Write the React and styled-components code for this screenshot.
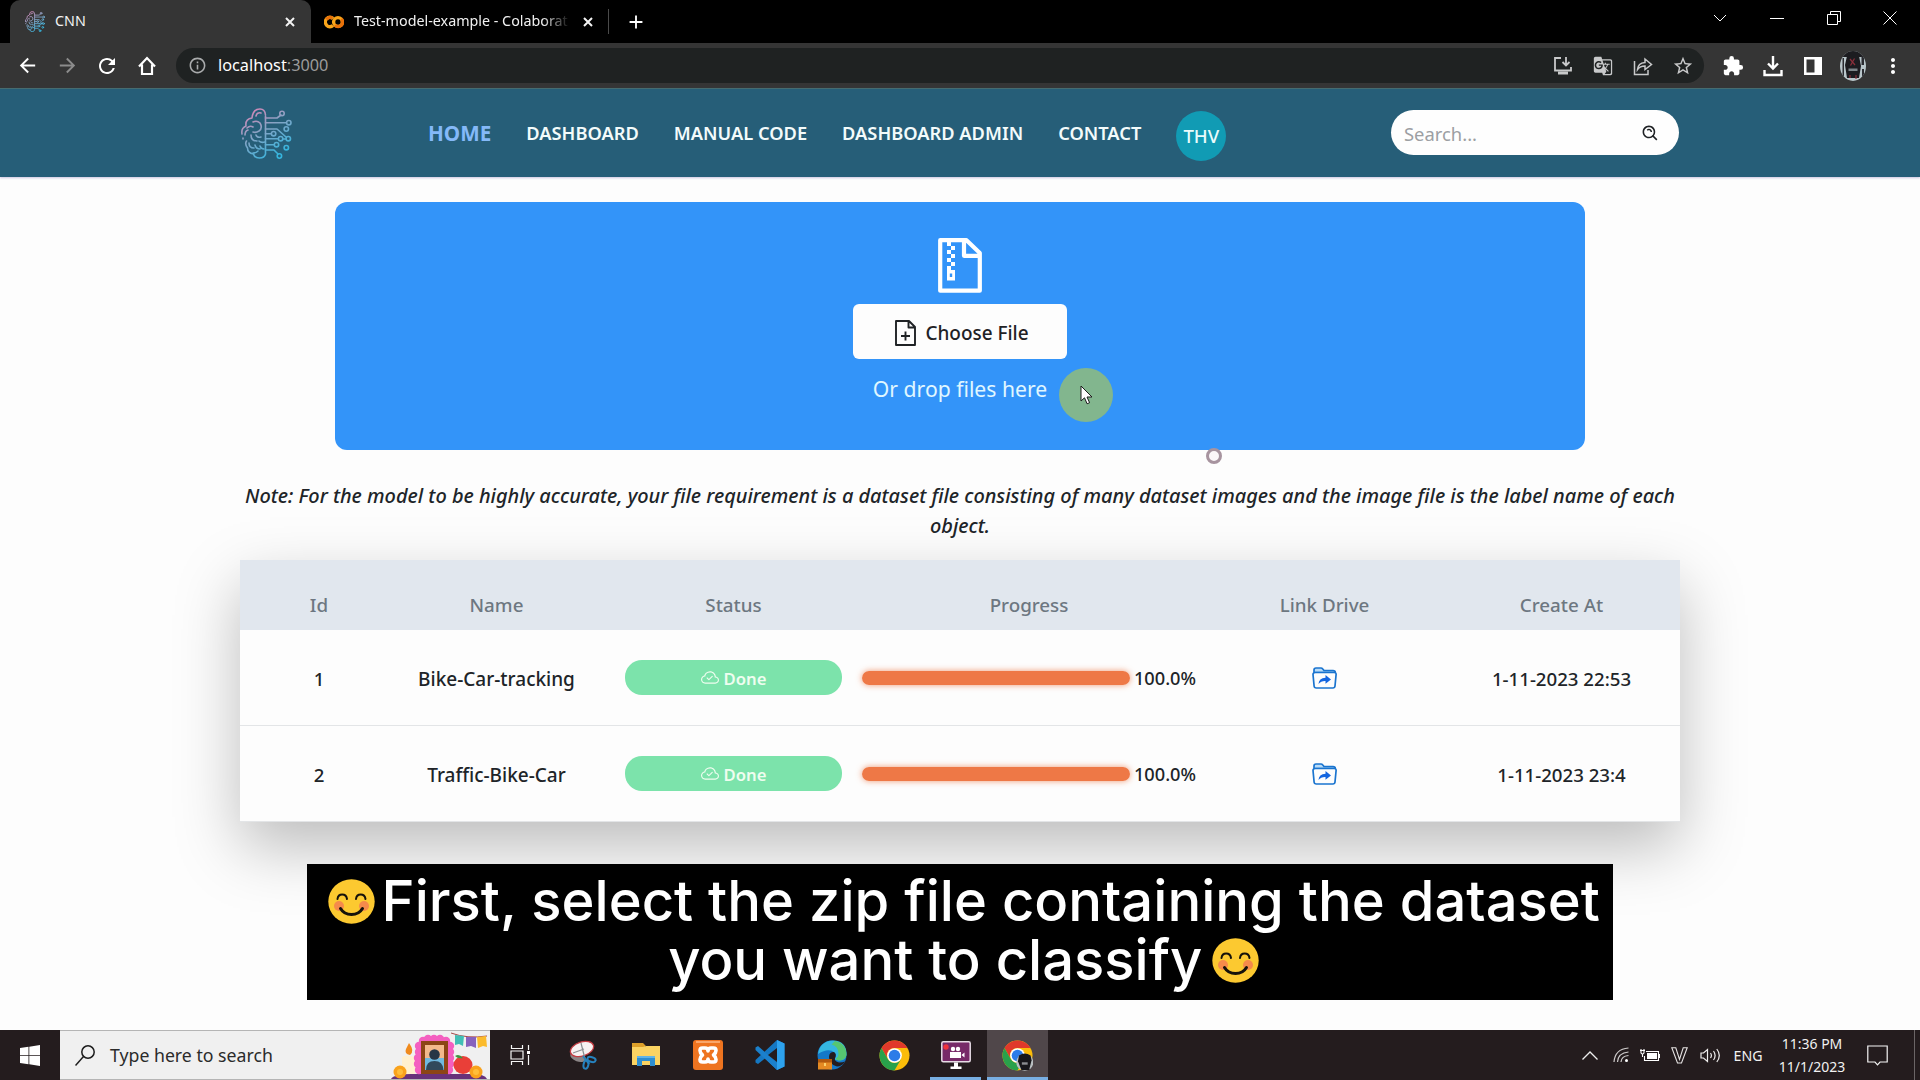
import React from 'react';
import styled, { createGlobalStyle } from 'styled-components';
import {
  MdArrowBack, MdArrowForward, MdRefresh, MdOutlineInfo, MdStarBorder,
  MdExtension, MdMoreVert, MdClose, MdAdd, MdGTranslate,
} from 'react-icons/md';
import { BiSearchAlt } from 'react-icons/bi';
import { BsCloudCheck } from 'react-icons/bs';

const Global = createGlobalStyle`
  *, *::before, *::after { box-sizing: border-box; }
  body { margin: 0; background: #fdfdfd; font-family: "Noto Sans", "Open Sans", sans-serif; overflow: hidden; }
  svg { display: block; flex: none; }
`;

/* ---------- shell ---------- */
const Screen = styled.div`
  position: relative;
  width: 1920px;
  height: 1080px;
  display: flex;
  flex-direction: column;
  overflow: hidden;
`;
const Slot = styled.span`
  width: ${p => p.$w || 40}px;
  height: 100%;
  flex: none;
  display: flex;
  align-items: center;
  justify-content: center;
  color: ${p => p.$c || '#fff'};
`;
const Grow = styled.span`flex: 1;`;

/* ---------- browser chrome ---------- */
const TabStrip = styled.header`
  height: 43px;
  flex: none;
  display: flex;
  align-items: stretch;
  background: #000;
  padding: 0 2px 0 10px;
`;
const Tab = styled.div`
  width: ${p => p.$w}px;
  display: flex;
  align-items: center;
  padding-left: ${p => p.$pl}px;
  border-radius: 10px 10px 0 0;
  background: ${p => (p.$active ? '#353535' : 'transparent')};
  color: #f1f1f1;
  font-size: 14.3px;
`;
const TabTitle = styled.span`
  width: ${p => p.$w}px;
  margin-left: 10px;
  white-space: nowrap;
  overflow: hidden;
  line-height: 20px;
  padding-bottom: 1px;
  ${p => p.$fade && 'mask-image: linear-gradient(90deg, #000 88%, transparent 101%);'}
`;
const TabDivider = styled.span`
  width: 1px;
  height: 25px;
  align-self: center;
  background: #4a4a4a;
`;
const WindowButtons = styled.div`
  display: flex;
  height: 36px;
  margin-left: auto;
`;
const Toolbar = styled.div`
  height: 45px;
  flex: none;
  display: flex;
  align-items: center;
  background: #353535;
  padding: 0 7px 0 7px;
`;
const AddressBar = styled.div`
  width: 1528px;
  height: 35px;
  margin: 0 9px 0 9px;
  padding: 0 1px 0 1px;
  border-radius: 18px;
  background: #1f2222;
  display: flex;
  align-items: center;
  color: #fff;
  font-size: 16.3px;
`;
const Url = styled.span`
  padding: 0 0 1px 1px;
`;
const Port = styled.span`color: #9b9b9b;`;
const Avatar = styled.span`
  width: 26px;
  height: 30px;
  border-radius: 50%;
  overflow: hidden;
`;

/* ---------- site header ---------- */
const Navbar = styled.nav`
  height: 89px;
  flex: none;
  display: flex;
  align-items: center;
  padding: 0 241px 0 241px;
  background: #265e78;
  border-top: 1px solid #466c70;
  box-shadow: 0 1px 2px rgba(110, 90, 170, 0.35);
`;
const NavList = styled.div`
  display: flex;
  align-items: center;
  gap: 35px;
  margin-left: 136px;
`;
const NavLink = styled.a`
  font-size: ${p => (p.$active ? 20.7 : 18.25)}px;
  font-weight: ${p => (p.$active ? 700 : 600)};
  color: ${p => (p.$active ? '#84b9f8' : '#f3fbfb')};
  white-space: nowrap;
  line-height: 30px;
`;
const UserBadge = styled.span`
  width: 50px;
  height: 50px;
  margin-top: 5px;
  border-radius: 50%;
  background: #119bb4;
  color: #e9fbfb;
  font-size: 18.6px;
  font-weight: 500;
  display: flex;
  align-items: center;
  justify-content: center;
`;
const SearchField = styled.div`
  width: 288px;
  height: 45px;
  margin: 0 0 1px auto;
  border-radius: 23px;
  background: #fefefe;
  display: flex;
  align-items: center;
  justify-content: space-between;
  padding: 1px 19px 0 13px;
  color: #9c9fa3;
  font-size: 18.4px;
`;

/* ---------- page content ---------- */
const Main = styled.main`
  flex: 1;
  width: 1440px;
  margin: 0 auto;
  padding-top: 25px;
  display: flex;
  flex-direction: column;
  align-items: center;
`;
const DropZone = styled.section`
  width: 1250px;
  height: 248px;
  flex: none;
  border-radius: 12px;
  background: #3394f9;
  display: flex;
  flex-direction: column;
  align-items: center;
  padding-top: 36px;
`;
const ChooseButton = styled.button`
  width: 214px;
  height: 55px;
  margin: 11px 0 15px;
  border: 0;
  border-radius: 6px;
  background: #fdfdfd;
  color: #1f2225;
  font: 500 18.95px/30px "Noto Sans", sans-serif;
  display: flex;
  align-items: center;
  justify-content: center;
  gap: 9px;
  padding: 2px 0 0 4px;
`;
const DropHint = styled.span`
  font-size: 21.15px;
  line-height: 30px;
  color: #e0f7ff;
`;
const Note = styled.p`
  width: 1440px;
  margin: 30.5px 0 19.5px;
  font-size: 19.9px;
  line-height: 30px;
  font-style: italic;
  font-weight: 500;
  text-align: center;
  color: #202428;
`;
const Table = styled.div`
  width: 1440px;
  background: #fdfdfd;
  box-shadow: 0 25px 60px rgba(0, 0, 0, 0.26);
  font-weight: 500;
`;
const GridRow = styled.div`
  display: grid;
  grid-template-columns: 158px 217px 237px 354px 237px 237px;
  align-items: center;
`;
const HeadRow = styled(GridRow)`
  height: 70px;
  padding-top: 20px;
  background: #e1e7ee;
  color: #6d7781;
  font-size: 18.8px;
`;
const BodyRow = styled(GridRow)`
  height: 96px;
  border-bottom: 1px solid #e3e5e7;
  color: #202428;
  font-size: 19px;
`;
const Cell = styled.div`
  display: flex;
  align-items: center;
  justify-content: center;
  padding: ${p => (p.$name ? '0 20px 0 0' : '0 10px')};
  gap: 4px;
  white-space: nowrap;
`;
const Num = styled.span`
  font-size: ${p => p.$s || 18.65}px;
  padding-top: ${p => p.$t || 1}px;
`;
const StatusPill = styled.span`
  width: 217px;
  height: 35px;
  border-radius: 17px;
  background: #7ce3ab;
  color: #effdf0;
  font-size: 16.7px;
  font-weight: 600;
  display: flex;
  align-items: center;
  justify-content: center;
  gap: 5px;
  padding-top: 1px;
`;
const Track = styled.span`
  flex: 1;
  height: 14px;
  margin-top: 1px;
  border-radius: 7px;
  box-shadow: 0 0 6px rgba(238, 120, 70, 0.75);
`;
const Fill = styled.span`
  display: block;
  height: 100%;
  border-radius: inherit;
  background: #ee7846;
`;

/* ---------- recording overlays ---------- */
const Caption = styled.div`
  position: absolute;
  left: 307px;
  top: 864px;
  width: 1305.500px;
  height: 136px;
  padding: 8px 0 0 8px;
  background: #000;
  color: #fff;
  font: 500 56.150px/59px Inter, sans-serif;
  display: flex;
  flex-direction: column;
  align-items: center;
`;
const CaptionLine = styled.div`
  display: flex;
  align-items: center;
  height: 59px;
  white-space: nowrap;
  gap: ${p => p.$gap || 7}px;
`;
const Pointer = styled.div`
  position: absolute;
  left: 1059px;
  top: 368px;
  width: 54px;
  height: 54px;
  border-radius: 50%;
  background: #82b68e;
  padding: 17px 0 0 21px;
`;
const ClickRing = styled.div`
  position: absolute;
  left: 1206px;
  top: 448px;
  width: 16px;
  height: 16px;
  border-radius: 50%;
  border: 3px solid #a7949f;
  background: #fbf7f9;
`;

/* ---------- taskbar ---------- */
const Taskbar = styled.footer`
  height: 50px;
  flex: none;
  position: relative;
  display: flex;
  align-items: stretch;
  background: #241c1e;
  color: #f1f1f1;
`;
const TaskSearch = styled.div`
  width: 430px;
  display: flex;
  align-items: center;
  background: #f0f0f0;
  border: 1px solid #b5b5b5;
  border-left: 0;
  border-right: 0;
  padding: 0 2px 0 15px;
  color: #2b2b2b;
  font-size: 17.7px;
`;
const SearchLabel = styled.span`
  margin-left: 15px;
`;
const AppButton = styled.span`
  width: ${p => p.$w || 62}px;
  display: flex;
  align-items: center;
  justify-content: center;
  background: ${p => (p.$active ? '#50474a' : 'transparent')};
  border-bottom: ${p => (p.$open || p.$active ? '3px solid #78aee2' : '0')};
  padding-top: ${p => (p.$open || p.$active ? 3 : 0)}px;
  margin: ${p => (p.$open ? '0 6px 0 5px' : '0')};
`;
const Tray = styled.div`
  margin-left: auto;
  display: flex;
  align-items: center;
`;
const Lang = styled.span`
  width: 36px;
  text-align: center;
  font-size: 14.2px;
`;
const Clock = styled.span`
  width: 80px;
  margin: 0 0 1px 6px;
  text-align: center;
  font-size: 14px;
  line-height: 23px;
  display: flex;
  flex-direction: column;
`;
const ShowDesktop = styled.span`
  width: 6px;
  height: 50px;
  margin-left: 11px;
  border-left: 1px solid #6b6566;
`;

/* ---------- drawings ---------- */
const Brain = ({ w, h, id, sw = 1.6 }) => (
  <svg width={w} height={h} viewBox="0 0 51 51" fill="none" stroke={`url(#${id})`} strokeWidth={sw} strokeLinecap="round" strokeLinejoin="round" preserveAspectRatio="none">
    <defs>
      <linearGradient id={id} gradientUnits="userSpaceOnUse" x1="8" y1="2" x2="36" y2="48">
        <stop offset="0" stopColor="#d986b6" />
        <stop offset="0.45" stopColor="#86a3c4" />
        <stop offset="1" stopColor="#35b5de" />
      </linearGradient>
    </defs>
    <path d="M24.5 8V46q-1 4-6 4q-5 0-6-4q-6-1-6-6q-3-4-1-7M1 26q-1-6 4-8q-1-7 6-8q1-9 8-9q5 0 5.500 6" />
    <path d="M15 8q1-4 5-3M12 14q4-2 7 1q3 5-1 8q-3 2-6 1M6 20q3-3 6-1M4 27q0-4 3-5M2 30v1M10 27q0 6 6 6M15 27q1 3 5 2M18 33q2 2 6 1M8 35q0 5 5 5M14 37q1 4 5 4M19 38q1 3 4 3M12 45q3 0 5-2" />
    <path d="M24.500 10H36l4-3M24.500 14.700H45M24.500 21H36L45 29M24.500 25.700H30M24.500 30.700H37M24.500 36.700H33M24.500 42H33l4 4M42 31h3" />
    {[[41, 5.5], [47.8, 14.7], [45.3, 21], [32.6, 25.7], [47.3, 30.7], [39.6, 30.7], [35.5, 36.7], [45.3, 39.7], [38.4, 48]].map(([x, y]) => <circle key={x + '-' + y} cx={x} cy={y} r="2.2" />)}
  </svg>
);
const CloseIcon = () => (
  <svg width="10" height="10" viewBox="0 0 10 10" stroke="#f4f4f4" strokeWidth="2"><path d="M1 1l8 8M9 1L1 9" /></svg>
);
const HomeIcon = () => (
  <svg width="18" height="20" viewBox="0 0 18 20" fill="none" stroke="#fff" strokeWidth="2.2"><path d="M1 10.500L9 2l8 8.500M4 8.500V18h10V8.500" /></svg>
);
const InstallIcon = () => (
  <svg width="20" height="20" viewBox="0 0 20 20" fill="none" stroke="#c8c9ca" strokeWidth="1.8"><path d="M8 2H2v12.500h16V11M13 1v8M9.500 6l3.500 3.500L16.500 6" /><path d="M5 17h10" strokeWidth="3" /></svg>
);
const ShareIcon = () => (
  <svg width="20" height="20" viewBox="0 0 20 20" fill="none" stroke="#c8c9ca" strokeWidth="1.5"><path d="M1.500 5V18.500H15V14M4.500 13.500q.5-6.500 7.500-7V3l6.500 5.500L12 13.500V10q-5 0-7.500 3.500z" /></svg>
);
const DownloadIcon = () => (
  <svg width="20" height="22" viewBox="0 0 20 22" fill="none" stroke="#fff" strokeWidth="2.4"><path d="M10 1v12M5 8.500l5 5 5-5M1.500 15v5h17v-5" /></svg>
);
const PanelIcon = () => (
  <svg width="18" height="18" viewBox="0 0 18 18"><path fill="#fff" d="M0 0h18v18H0zM2.500 2.500v13h8v-13z" fillRule="evenodd" /></svg>
);
const AvatarArt = () => (
  <svg width="26" height="30" viewBox="0 0 26 30">
    <path fill="#b9c6ca" d="M0 0h26v30H0z" /><path fill="#1c1c20" d="M2 0h22v6H2zM7 5l6-3 6 3 2 10-2 12H7L5 14z" />
    <path fill="#2a2b30" d="M2.500 7h1.500v18H2.500zM21.500 5h2.500v9h-2.500zM22 18h2v8h-2z" /><path stroke="#8c2f3a" strokeWidth="1.200" d="M10 8l5 6M14.500 7.500l-4 7M10 27v-3M16 28v-4" /><path fill="#7d8589" d="M8.500 17.500h9v2.500h-9z" />
  </svg>
);
const WinIcon = ({ d, w = 14 }) => (
  <svg width={w} height="14" viewBox="0 0 14 14" fill="none" stroke="#fff" strokeWidth="1"><path d={d} /></svg>
);
const ZipIcon = () => (
  <svg width="44" height="55" viewBox="0 0 44 55" fill="none" stroke="#fff" strokeWidth="4.200">
    <path strokeLinejoin="round" d="M2.200 2.200H28.500L41.800 15V52.700H2.200zM26 2.200V17.800H41.800" />
    <path fill="#fff" stroke="none" d="M9 4h4v4H9zM13 8h4v4h-4zM9 12h4v4H9zM13 16h4v4h-4zM9 20h4v4H9zM13 24h4v4h-4zM9 28h4v4H9z" />
    <path fill="#fff" stroke="none" fillRule="evenodd" d="M9 32h8v10.500H9zM11.800 35.500v3.500h2.400v-3.500z" />
  </svg>
);
const FilePlus = () => (
  <svg width="21" height="26" viewBox="0 0 21 26" fill="none" stroke="#1f2225" strokeWidth="1.900" strokeLinejoin="round"><path d="M1 1H14L20 7V25H1zM13.500 1V7.500H20M10.500 11.500v9M6 16h9" /></svg>
);
const FolderShare = () => (
  <svg width="25" height="22" viewBox="0 0 25 22" fill="none" stroke="#1a74cf" strokeWidth="1.700" strokeLinejoin="round">
    <path fill="#b9dcf8" d="M2 5.500V3Q2 1 4 1H9q1 0 1.600.8L12 3.500H21q2.300 0 2.300 2z" /><path fill="#fdfdfd" d="M3.500 5.500H22q2.200 0 2.100 2L23 19q-.2 2-2.200 2H4.300q-2 0-2.200-2L1 7.500q0-2 2.500-2z" />
    <path fill="#1566e0" stroke="none" d="M6.500 17q.3-6 7-6.300V8l5.500 4.400-5.500 4.300V14q-4.500-.2-7 3z" />
  </svg>
);
const Smile = () => (
  <svg width="47" height="45" viewBox="0 0 47 45" role="img">
    <ellipse cx="23.500" cy="22.500" rx="23.200" ry="22.200" fill="#fcc930" />
    <circle cx="11" cy="27" r="5" fill="#f58a4b" /><circle cx="36" cy="27" r="5" fill="#f58a4b" />
    <g fill="none" stroke="#15120b" strokeLinecap="round"><path strokeWidth="2" d="M9.500 20q.5-4.500 4.700-4.500T19 20M28 20q.5-4.500 4.700-4.500T37.500 20" /><path strokeWidth="3" d="M12.500 29.500q3.500 6 11 6t11-6" /></g>
  </svg>
);
const Colab = () => (
  <svg width="20" height="14" viewBox="0 0 20 14" fill="none" strokeWidth="3.400"><path stroke="#f9a51a" d="M9 3.500a4.500 4.800 0 1 0 0 7" /><circle cx="14" cy="7" r="4.400" stroke="#f9a51a" /><path stroke="#e8710a" d="M11 10.300a4.400 4.400 0 0 0 6.300-6.300M2.500 4.500a4.500 4.500 0 0 1 6-1.500" /></svg>
);
const Chrome = ({ s = 31, badge }) => (
  <svg width={s} height={s} viewBox="0 0 32 32">
    <circle cx="16" cy="16" r="15.500" fill="#fbbc09" />
    <path fill="#e0392b" d="M2.600 8.200A15.500 15.500 0 0 1 29.400 8.200H16A7.800 7.800 0 0 0 9.200 19.900z" />
    <path fill="#29a14b" d="M2.600 8.200A15.500 15.500 0 0 0 15.900 31.500L22.700 19.900A7.800 7.800 0 0 1 9.200 19.900z" />
    <circle cx="16" cy="16" r="7.600" fill="#fff" /><circle cx="16" cy="16" r="6" fill="#2d7ce8" />
    {badge && <g><circle cx="23.500" cy="23" r="8.800" fill="#b9bfc1" /><path fill="#17171a" d="M17.500 16q6-4 12 0l1 5-2.500 10h-8L16.500 22z" /><path fill="#8a8d90" d="M20.500 23h6v2.500h-6z" /></g>}
  </svg>
);
const DeadAltar = () => (
  <svg width="97" height="48" viewBox="0 0 97 48">
    <path fill="#68327a" d="M0 48q3-5 20-5h60q14 0 16 5z" /><path fill="#fff0cf" d="M11 26q6-3 13 0v17H11z" /><path fill="#f08a1d" d="M18 12q6 8 1 12-6-1-4-6z" />
    {[[32, 10], [37, 8], [43, 8], [49, 8], [55, 10], [59, 15], [59, 21], [59, 27], [59, 33], [58, 39], [28, 15], [28, 21], [27, 27], [27, 33], [28, 39]].map(([x, y]) => <circle key={x + '-' + y} cx={x} cy={y} r="4.200" fill="#f45fc0" />)}
    <path fill="#8c4515" d="M30 10h27v33H30z" /><path fill="#f3b98c" d="M34 14h19v14H34z" /><path fill="#70b9df" d="M34 27h19v12H34z" /><circle cx="43.500" cy="23.500" r="5.300" fill="#273645" /><path fill="#31495b" d="M35 39q0-9 8.500-9t9 9z" />
    <ellipse cx="72" cy="34" rx="9.500" ry="9" fill="#e93f38" /><path fill="#3d9440" d="M64 25q4-3 8 2-5 1-8-2z" />
    <path stroke="#a64a4a" strokeWidth="1" fill="none" d="M60 2q16 6 36 3" /><path fill="#41bfb5" d="M64 4l9 1-1 10-4-2-4 1z" /><path fill="#8762bd" d="M75 6h10v11l-5-2-5 1z" /><path fill="#fbbb2c" d="M86 6l9-1 1 11-4-1-5 2z" />
    <circle cx="9" cy="41" r="6.500" fill="#f9a21c" /><circle cx="9" cy="41" r="3" fill="#ffbd3a" /><circle cx="85" cy="41" r="6.500" fill="#f9a21c" /><circle cx="85" cy="41" r="3" fill="#ffbd3a" />
  </svg>
);
const TaskView = () => (
  <svg width="21" height="20" viewBox="0 0 21 20" fill="none" stroke="#f5f5f5" strokeWidth="1.200"><path d="M1.500 0v3.500h11V0M1 6h12v8H1zM1.500 20v-3.500h11V20M18.500 0v5M18.500 10v10" /><path fill="#fff" stroke="none" d="M17 6h3v3h-3z" /></svg>
);
const Snip = () => (
  <svg width="28" height="30" viewBox="0 0 28 30"><ellipse cx="9" cy="17" rx="8" ry="4.500" fill="#8b8586" transform="rotate(20 9 17)" /><ellipse cx="13" cy="9" rx="12" ry="7" fill="#f7f2f2" stroke="#c23b42" strokeWidth="1.300" transform="rotate(-18 13 9)" /><path d="M12 3l4 16M4 13l11-4" stroke="#8b8f92" strokeWidth="1.200" /><g fill="none" stroke="#2682bf" strokeWidth="2"><ellipse cx="22.500" cy="19.500" rx="4.200" ry="2.400" transform="rotate(15 22.500 19.500)" /><ellipse cx="17" cy="24.500" rx="2.400" ry="4.200" transform="rotate(12 17 24.500)" /><path d="M14 16l6 8" /></g></svg>
);
const Explorer = () => (
  <svg width="28" height="26" viewBox="0 0 28 26"><path fill="#dda02a" d="M0 1h11l3 3h-1v4H0z" /><path fill="#fbd362" d="M0 5h11l3-1h14v19H0z" /><path fill="#2e8ed0" d="M5 14h18v10h-5v-5h-8v5H5z" /><path fill="#61b4e6" d="M5 14h18v2H5z" /></svg>
);
const Xampp = () => (
  <svg width="30" height="30" viewBox="0 0 30 30"><rect width="30" height="30" rx="3" fill="#ee7420" /><path fill="#f9a66a" d="M3 1h24v2H3z" /><path d="M9.500 8h2.500q3 0 3 3 0-3 3-3h2.500q2.500 0 2.500 2.500T20.500 15q2.500 2 2.500 4.500T20.500 22H18q-3 0-3-3 0 3-3 3H9.500Q7 22 7 19.500T9.500 15Q7 13 7 10.500T9.500 8z" fill="none" stroke="#fff" strokeWidth="3.600" strokeLinejoin="round" /></svg>
);
const VsCode = () => (
  <svg width="30" height="30" viewBox="0 0 30 30"><path fill="#1577c2" d="M22 0l7.500 3.500v23L22 30 10 18.500 3 24 .5 22.500V20L22 0z" /><path fill="#1b80cc" d="M.5 7.500L3 6l19 17v7L.5 10z" /><path fill="#2ea2ee" d="M22 0l7.500 3.500v23L22 30z" /><path fill="#241c1e" d="M22 8v14l-9-7z" /></svg>
);
const Edge = () => (
  <svg width="30" height="30" viewBox="0 0 30 30"><circle cx="15" cy="15" r="14.500" fill="#1478c8" /><path fill="#35b6e0" d="M1 14Q3 1 16 .5 30 1 29.500 15q-1 6-8 5.500l-4-1q3-4 0-7-6-5-16.500 1.500z" /><path fill="#5cc95d" d="M18 1q11 2 11.500 13 0 5-6 6.500-4 0-5-2 3-1 3-5 0-7-7-9z" opacity=".85" /><path fill="#241c1e" d="M12 17q0-5 5-5 3 2 1 6-1 3 4 4.500 4 0 6-1-3 5-8 5-8-2-8-9.500z" /><path fill="#e58a23" d="M1 19h14v10.500H1z" /><path fill="#b2590e" d="M1 19h14v3.500H1z" /><path fill="#fbd06a" d="M7 23h2v3H7z" /></svg>
);
const Recorder = () => (
  <svg width="30" height="28" viewBox="0 0 30 28"><rect x=".8" y=".8" width="28.400" height="20" rx="1.500" fill="#772a68" stroke="#e7dce5" strokeWidth="1.500" /><circle cx="5" cy="6" r="2.700" fill="#f0323c" /><path fill="#fff" d="M9 11h11v6H9zM20.500 14l3-2.500v5zM13 21.500h4v4h3.500V28h-11v-2.500H13z" /><circle cx="12" cy="8" r="2.200" fill="#fff" /><circle cx="17" cy="8" r="2.200" fill="#fff" /></svg>
);

const rows = [
  { id: 1, name: 'Bike-Car-tracking', progress: 100, at: '1-11-2023 22:53' },
  { id: 2, name: 'Traffic-Bike-Car', progress: 100, at: '1-11-2023 23:4' },
];

export default function App() {
  return (
    <Screen>
      <Global />
      <TabStrip>
        <Tab $w={301} $pl={15} $active>
          <Brain w={20} h={21} id="fav" sw={2.2} />
          <TabTitle $w={215}>CNN</TabTitle>
          <Slot $w={40}><CloseIcon /></Slot>
        </Tab>
        <Tab $w={297} $pl={13}>
          <Colab />
          <TabTitle $w={214} $fade>Test-model-example - Colaborat</TabTitle>
          <Slot $w={40}><CloseIcon /></Slot>
        </Tab>
        <TabDivider />
        <Slot $w={53}><MdAdd size={22} /></Slot>
        <WindowButtons>
          <Slot $w={56} $c="#ccc"><WinIcon d="M1 4l6 6 6-6" /></Slot>
          <Slot $w={58}><WinIcon d="M0 7.500h14" /></Slot>
          <Slot $w={56}><WinIcon d="M.5 3.500h10v10H.5zM3.500 3.500v-3h10v10h-3" /></Slot>
          <Slot $w={56}><WinIcon d="M.5.500l13 13M13.500.500l-13 13" /></Slot>
        </WindowButtons>
      </TabStrip>
      <Toolbar>
        <Slot><MdArrowBack size={23} /></Slot>
        <Slot $c="#8c8c8c"><MdArrowForward size={23} /></Slot>
        <Slot><MdRefresh size={24} /></Slot>
        <Slot><HomeIcon /></Slot>
        <AddressBar>
          <Slot $c="#a9abac"><MdOutlineInfo size={19} /></Slot>
          <Url>localhost<Port>:3000</Port></Url>
          <Grow />
          <Slot><InstallIcon /></Slot>
          <Slot $c="#c8c9ca"><MdGTranslate size={20} /></Slot>
          <Slot><ShareIcon /></Slot>
          <Slot $c="#c8c9ca"><MdStarBorder size={22} /></Slot>
        </AddressBar>
        <Slot><MdExtension size={22} /></Slot>
        <Slot><DownloadIcon /></Slot>
        <Slot><PanelIcon /></Slot>
        <Slot><Avatar><AvatarArt /></Avatar></Slot>
        <Slot><MdMoreVert size={24} /></Slot>
      </Toolbar>

      <Navbar>
        <Brain w={51} h={51} id="logo" />
        <NavList>
          <NavLink $active>HOME</NavLink>
          <NavLink>DASHBOARD</NavLink>
          <NavLink>MANUAL CODE</NavLink>
          <NavLink>DASHBOARD ADMIN</NavLink>
          <NavLink>CONTACT</NavLink>
          <UserBadge>THV</UserBadge>
        </NavList>
        <SearchField>Search...<BiSearchAlt size={19} color="#1f2225" /></SearchField>
      </Navbar>

      <Main>
        <DropZone>
          <ZipIcon />
          <ChooseButton><FilePlus />Choose File</ChooseButton>
          <DropHint>Or drop files here</DropHint>
        </DropZone>
        <Note>
          Note: For the model to be highly accurate, your file requirement is a dataset file consisting of many dataset images and the image file is the label name of each object.
        </Note>
        <Table>
          <HeadRow>
            <Cell>Id</Cell>
            <Cell $name>Name</Cell>
            <Cell>Status</Cell>
            <Cell>Progress</Cell>
            <Cell>Link Drive</Cell>
            <Cell>Create At</Cell>
          </HeadRow>
          {rows.map(r => (
            <BodyRow key={r.id}>
              <Cell><Num>{r.id}</Num></Cell>
              <Cell $name><Num $s={19} $t={2}>{r.name}</Num></Cell>
              <Cell><StatusPill><BsCloudCheck size={18} />Done</StatusPill></Cell>
              <Cell>
                <Track><Fill style={{ width: `${r.progress}%` }} /></Track>
                <Num $s={18.2}>{r.progress.toFixed(1)}%</Num>
              </Cell>
              <Cell><FolderShare /></Cell>
              <Cell><Num>{r.at}</Num></Cell>
            </BodyRow>
          ))}
        </Table>
      </Main>

      <Taskbar>
        <Slot $w={60}>
          <svg width="20" height="21" viewBox="0 0 20 21"><path fill="#fff" d="M0 3l8.500-1.200V10H0zM9.300 1.700L20 0v10H9.300zM0 10.800h8.500v8.400L0 18zM9.300 10.800H20V21L9.300 19.300z" /></svg>
        </Slot>
        <TaskSearch>
          <svg width="20" height="21" viewBox="0 0 20 21" fill="none" stroke="#1c1c1c" strokeWidth="1.500"><circle cx="13" cy="7" r="6.200" /><path d="M8.500 11.500L.5 20.500" /></svg>
          <SearchLabel>Type here to search</SearchLabel>
          <Grow />
          <DeadAltar />
        </TaskSearch>
        <AppButton $w={60}><TaskView /></AppButton>
        <AppButton $w={65}><Snip /></AppButton>
        <AppButton><Explorer /></AppButton>
        <AppButton><Xampp /></AppButton>
        <AppButton><VsCode /></AppButton>
        <AppButton><Edge /></AppButton>
        <AppButton><Chrome /></AppButton>
        <AppButton $w={51} $open><Recorder /></AppButton>
        <AppButton $w={61} $active><Chrome badge /></AppButton>
        <Tray>
          <Slot $w={40}><svg width="16" height="9" viewBox="0 0 16 9" fill="none" stroke="#eee" strokeWidth="1.300"><path d="M.5 8.500L8 1l7.500 7.500" /></svg></Slot>
          <Slot $w={22}><svg width="16" height="16" viewBox="0 0 16 16" fill="none" stroke="#cfcccc" strokeWidth="1.200"><path d="M1 15Q2 2 15.500 1M4.500 15Q5 6 15.500 5M8 15q.5-6 7.500-6.500" /><circle cx="13.500" cy="13.500" r="1.500" fill="#fff" stroke="none" /></svg></Slot>
          <Slot $w={36}><svg width="20" height="14" viewBox="0 0 20 14" fill="none" stroke="#fff" strokeWidth="1.100"><path d="M6 3.500h12.500v9H4.500V8M19.500 6v4M1 1v4q1.500 2 3 0V1M0 2.500h5M2.500 6v3" /><path fill="#fff" stroke="none" d="M7 5h10v6H7z" /></svg></Slot>
          <Slot $w={22}><svg width="17" height="17" viewBox="0 0 17 17" fill="none" stroke="#e6e3e3" strokeWidth="1.100"><path d="M.8.800h4L8.500 12.500 12.200.800h4L10.500 16h-4z" /></svg></Slot>
          <Slot $w={40}><svg width="21" height="15" viewBox="0 0 21 15" fill="none" stroke="#f0eeee" strokeWidth="1.200"><path d="M1 5h2.500L7.500 1.500v12L3.500 10H1zM10.500 5q1.800 2.500 0 5M13.500 3q3.200 4.500 0 9M16.800 1q5 6.500 0 13" /></svg></Slot>
          <Lang>ENG</Lang>
          <Clock><span>11:36 PM</span><span>11/1/2023</span></Clock>
          <Slot $w={51}><svg width="21" height="21" viewBox="0 0 21 21" fill="none" stroke="#f5f5f5" strokeWidth="1.200"><path d="M.8 1h19.400v16H13l-2.500 2.800L8 17H.800z" /></svg></Slot>
          <ShowDesktop />
        </Tray>
      </Taskbar>

      <ClickRing />
      <Pointer>
        <svg width="14" height="20" viewBox="0 0 14 20"><path fill="#fff" stroke="#1c1c1c" strokeWidth="1" d="M1 1v15l3.500-3.200 2.600 6 2.500-1.100L7 12h5z" /></svg>
      </Pointer>
      <Caption>
        <CaptionLine><Smile />First, select the zip file containing the dataset</CaptionLine>
        <CaptionLine $gap={10}>you want to classify<Smile /></CaptionLine>
      </Caption>
    </Screen>
  );
}
